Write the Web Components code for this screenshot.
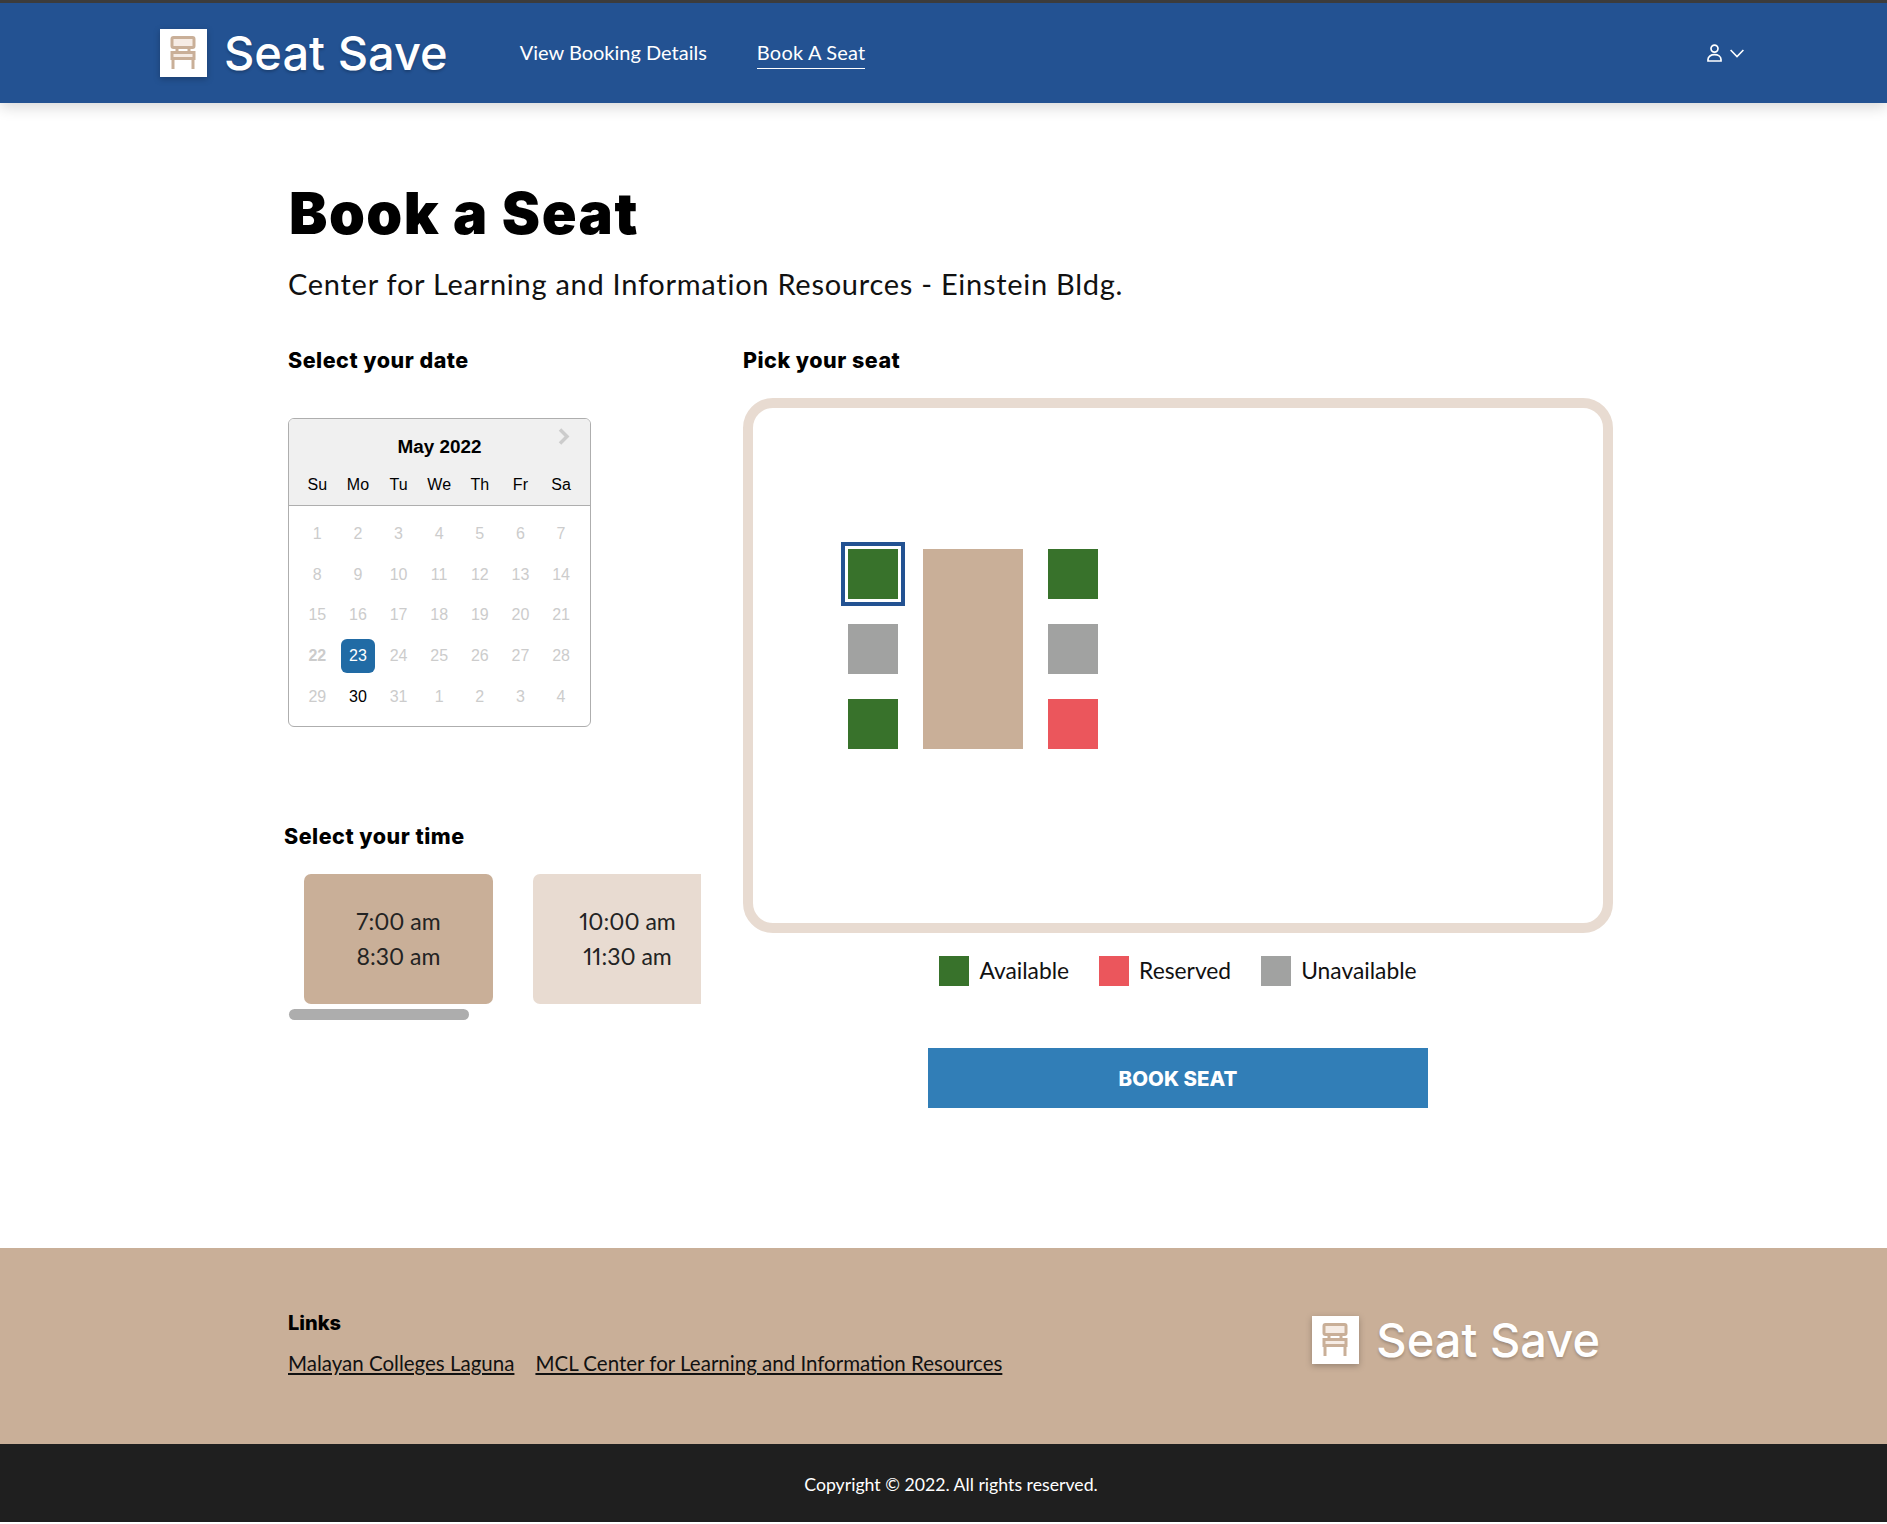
<!DOCTYPE html>
<html lang="en">
<head>
<meta charset="utf-8">
<title>Seat Save - Book a Seat</title>
<style>
  html, body { margin: 0; padding: 0; background: #fff; }
  body { font-family: "Lato", "Liberation Sans", sans-serif; color: #000; }
  page-main { display: block; }
</style>
</head>
<body>
<site-header></site-header>
<page-main>
  <booking-page></booking-page>
</page-main>
<site-footer></site-footer>

<script>
const FONT = '"Lato", "Liberation Sans", sans-serif';
const HEAVY = '"Inter", "Liberation Sans", sans-serif';

class SeatLogo extends HTMLElement {
  constructor() {
    super();
    this.attachShadow({ mode: 'open' });
    this.shadowRoot.innerHTML = `
      <style>
        :host { display: flex; align-items: center; gap: 17px; }
        svg { display: block; width: 47px; height: 48px; filter: drop-shadow(0 2px 3px rgba(0,0,0,.25)); }
        span {
          font: 500 47px/56px ${HEAVY};
          color: #fff;
          text-shadow: 0 2px 3px rgba(0,0,0,.22);
          white-space: nowrap;
        }
      </style>
      <svg viewBox="0 0 47 48">
        <rect width="47" height="48" fill="#fff"/>
        <g fill="none" stroke="#c9af98" stroke-width="3">
          <rect x="12" y="8.500" width="22" height="10" rx="1.500" fill="#f6ece5"/>
          <rect x="12" y="23.500" width="22" height="6" fill="#f6ece5"/>
          <path d="M17 18v5.500M29 18v5.500M13 29v11M33 29v11"/>
        </g>
      </svg>
      <span>Seat Save</span>
    `;
  }
}
customElements.define('seat-logo', SeatLogo);

class SiteHeader extends HTMLElement {
  constructor() {
    super();
    this.attachShadow({ mode: 'open' });
    this.shadowRoot.innerHTML = `
      <style>
        :host {
          display: flex;
          align-items: center;
          box-sizing: border-box;
          height: 103px;
          border-top: 3px solid #3c3c3c;
          padding: 0 143px 0 160px;
          background: #235292;
          box-shadow: 0 4px 14px rgba(0,0,0,.16);
          position: relative;
        }
        nav { display: flex; gap: 50px; margin-left: 72px; }
        a {
          font: 400 20px/28px ${FONT};
          color: #fff;
          text-decoration: none;
          padding-bottom: 2px;
          border-bottom: 1px solid transparent;
        }
        a.active { border-bottom-color: #fff; letter-spacing: 0.2px; }
        .user { display: flex; align-items: center; gap: 8px; margin-left: auto; }
        svg { display: block; }
      </style>
      <seat-logo></seat-logo>
      <nav>
        <a href="#">View Booking Details</a>
        <a href="#" class="active">Book A Seat</a>
      </nav>
      <div class="user">
        <svg width="15" height="18" viewBox="0 0 15 18" fill="none" stroke="#fff" stroke-width="1.7">
          <circle cx="7.5" cy="4.6" r="3.5"/>
          <path d="M1 17h13v-1.400c0-3-3-4.900-6.500-4.900s-6.500 1.900-6.500 4.900z"/>
        </svg>
        <svg width="14" height="9" viewBox="0 0 14 9" fill="none" stroke="#fff" stroke-width="1.6">
          <path d="M.6 1l6.400 6.500L13.400 1"/>
        </svg>
      </div>
    `;
  }
}
customElements.define('site-header', SiteHeader);

class SectionTitle extends HTMLElement {
  constructor() {
    super();
    this.attachShadow({ mode: 'open' });
    this.shadowRoot.innerHTML = `
      <style>
        :host { display: block; font: 800 21.5px/30px ${HEAVY}; letter-spacing: 0.5px; color: #000; }
      </style>
      <slot></slot>
    `;
  }
}
customElements.define('section-title', SectionTitle);

class DateCalendar extends HTMLElement {
  constructor() {
    super();
    this.attachShadow({ mode: 'open' });
    const names = ['Su', 'Mo', 'Tu', 'We', 'Th', 'Fr', 'Sa'];
    const days = [];
    for (let d = 1; d <= 31; d++) days.push(d);
    for (let d = 1; d <= 4; d++) days.push(d);
    const cells = days.map((d, i) => {
      let cls = 'day';
      if (i === 21) cls += ' today';
      if (i === 22) cls += ' selected';
      if (i === 29) cls += ' open';
      return `<div class="${cls}">${d}</div>`;
    }).join('');
    this.shadowRoot.innerHTML = `
      <style>
        :host {
          display: block;
          box-sizing: border-box;
          width: 303px;
          height: 309px;
          border: 1px solid #aeaeae;
          border-radius: 6px;
          font-family: "Liberation Sans", Arial, sans-serif;
          position: relative;
          overflow: hidden;
        }
        .head {
          background: #f0f0f0;
          border-bottom: 1px solid #aeaeae;
          height: 87px;
          box-sizing: border-box;
          padding-top: 9px;
        }
        .month { font-size: 18.88px; font-weight: 700; line-height: 38px; text-align: center; }
        .grid { display: grid; grid-template-columns: repeat(7, 34px); gap: 0 6.64px; padding: 0 11.3px; }
        .names { margin-top: 2px; }
        .names div { height: 34px; line-height: 34px; text-align: center; font-size: 16px; }
        .body { margin-top: 11px; row-gap: 6.64px; }
        .day { height: 34px; line-height: 34px; text-align: center; font-size: 16px; color: #ccc; border-radius: 6px; }
        .today { font-weight: 700; }
        .selected { background: #216ba5; color: #fff; }
        .open { color: #000; }
        .next { position: absolute; top: 9px; right: 20px; display: block; }
      </style>
      <div class="head">
        <div class="month">May 2022</div>
        <div class="grid names">${names.map(n => `<div>${n}</div>`).join('')}</div>
      </div>
      <div class="grid body">${cells}</div>
      <svg class="next" width="12" height="17" viewBox="0 0 12 17" fill="none" stroke="#ccc" stroke-width="3.5">
        <path d="M2 1.500l7 7-7 7"/>
      </svg>
    `;
  }
}
customElements.define('date-calendar', DateCalendar);

class TimeCard extends HTMLElement {
  constructor() {
    super();
    this.attachShadow({ mode: 'open' });
    this.shadowRoot.innerHTML = `
      <style>
        :host {
          display: flex;
          flex: none;
          align-items: center;
          justify-content: center;
          box-sizing: border-box;
          width: 189px;
          height: 130px;
          border-radius: 7px;
          background: #e8dbd1;
          color: #232323;
          font: 400 23px/35px ${FONT};
          font-variant-numeric: proportional-nums;
          text-align: center;
          white-space: pre-line;
        }
        :host([active]) { background: #c9af98; }
      </style>
      <slot></slot>
    `;
  }
}
customElements.define('time-card', TimeCard);

class TimeSlots extends HTMLElement {
  constructor() {
    super();
    this.attachShadow({ mode: 'open' });
    this.shadowRoot.innerHTML = `
      <style>
        :host { display: block; width: 413px; }
        .track { display: flex; gap: 40px; padding-left: 16px; overflow: hidden; }
        .thumb { width: 180px; height: 11px; margin: 5px 0 0 1px; border-radius: 6px; background: #adadad; }
      </style>
      <div class="track"><slot></slot></div>
      <div class="thumb"></div>
    `;
  }
}
customElements.define('time-slots', TimeSlots);

class SeatMap extends HTMLElement {
  constructor() {
    super();
    this.attachShadow({ mode: 'open' });
    this.shadowRoot.innerHTML = `
      <style>
        :host {
          display: block;
          box-sizing: border-box;
          height: 535px;
          border: 10px solid #e8dbd1;
          border-radius: 30px;
          padding: 141px 0 0 95px;
        }
        .plan {
          display: grid;
          grid-template-columns: 50px 100px 50px;
          grid-template-rows: repeat(3, 50px);
          gap: 25px;
          width: max-content;
        }
        .seat.green { background: #38722b; }
        .seat.grey { background: #a1a2a1; }
        .seat.red { background: #eb565c; }
        .seat.picked { outline: 4px solid #235292; outline-offset: 3px; }
        .table { grid-column: 2; grid-row: 1 / 4; background: #c9af98; }
      </style>
      <div class="plan">
        <div class="seat green picked" style="grid-area:1/1"></div>
        <div class="seat grey" style="grid-area:2/1"></div>
        <div class="seat green" style="grid-area:3/1"></div>
        <div class="table"></div>
        <div class="seat green" style="grid-area:1/3"></div>
        <div class="seat grey" style="grid-area:2/3"></div>
        <div class="seat red" style="grid-area:3/3"></div>
      </div>
    `;
  }
}
customElements.define('seat-map', SeatMap);

class SeatLegend extends HTMLElement {
  constructor() {
    super();
    this.attachShadow({ mode: 'open' });
    this.shadowRoot.innerHTML = `
      <style>
        :host {
          display: flex;
          justify-content: center;
          gap: 30px;
          font: 400 22.8px/30px ${FONT};
          color: #111;
        }
        div { display: flex; align-items: center; gap: 10px; }
        i { display: block; width: 30px; height: 30px; }
        span { margin-top: -2px; }
      </style>
      <div><i style="background:#38722b"></i><span>Available</span></div>
      <div><i style="background:#eb565c"></i><span>Reserved</span></div>
      <div><i style="background:#a1a2a1"></i><span>Unavailable</span></div>
    `;
  }
}
customElements.define('seat-legend', SeatLegend);

class BookButton extends HTMLElement {
  constructor() {
    super();
    this.attachShadow({ mode: 'open' });
    this.shadowRoot.innerHTML = `
      <style>
        :host { display: block; width: 500px; margin: 0 auto; }
        button {
          display: block;
          width: 100%;
          height: 60px;
          border: none;
          background: #317eb7;
          color: #fff;
          font: 800 20.5px/60px ${HEAVY};
          cursor: pointer;
        }
      </style>
      <button><slot></slot></button>
    `;
  }
}
customElements.define('book-button', BookButton);

class BookingPage extends HTMLElement {
  constructor() {
    super();
    this.attachShadow({ mode: 'open' });
    this.shadowRoot.innerHTML = `
      <style>
        :host { display: block; padding: 76px 0 140px 288px; }
        h1 { margin: 0 0 0 1px; font: 900 57.5px/68px ${HEAVY}; letter-spacing: 1.5px; color: #000; }
        .sub { margin: 17px 0 0; font: 400 29px/40px ${FONT}; letter-spacing: 0.73px; color: #111; }
        .cols { display: flex; gap: 42px; margin-top: 41px; }
        .left { width: 413px; flex: none; }
        .right { width: 870px; flex: none; }
        date-calendar { margin-top: 43px; }
        .time-title { margin: 94px 0 23px -4px; }
        seat-map { margin-top: 23px; }
        seat-legend { margin-top: 23px; }
        book-button { margin-top: 62px; }
      </style>
      <h1>Book a Seat</h1>
      <p class="sub">Center for Learning and Information Resources - Einstein Bldg.</p>
      <div class="cols">
        <div class="left">
          <section-title>Select your date</section-title>
          <date-calendar></date-calendar>
          <section-title class="time-title">Select your time</section-title>
          <time-slots>
            <time-card active>7:00 am
8:30 am</time-card>
            <time-card>10:00 am
11:30 am</time-card>
          </time-slots>
        </div>
        <div class="right">
          <section-title>Pick your seat</section-title>
          <seat-map></seat-map>
          <seat-legend></seat-legend>
          <book-button>BOOK SEAT</book-button>
        </div>
      </div>
    `;
  }
}
customElements.define('booking-page', BookingPage);

class SiteFooter extends HTMLElement {
  constructor() {
    super();
    this.attachShadow({ mode: 'open' });
    this.shadowRoot.innerHTML = `
      <style>
        :host { display: block; }
        .links-band {
          display: flex;
          justify-content: space-between;
          box-sizing: border-box;
          height: 196px;
          padding: 63px 287px 0 288px;
          background: #c9af98;
        }
        .label { font: 800 20px/24px ${HEAVY}; color: #000; }
        .row { display: flex; gap: 21px; margin-top: 14px; }
        a { font: 400 20.5px/28px ${FONT}; color: #111; text-decoration: underline; }
        seat-logo { margin-top: 1px; align-self: flex-start; }
        .copy {
          box-sizing: border-box;
          height: 78px;
          padding: 28px 0 0 15px;
          background: #1f1f1f;
          color: #fff;
          text-align: center;
          font: 400 17.7px/26px ${FONT};
        }
      </style>
      <div class="links-band">
        <div>
          <div class="label">Links</div>
          <div class="row">
            <a href="#">Malayan Colleges Laguna</a>
            <a href="#">MCL Center for Learning and Information Resources</a>
          </div>
        </div>
        <seat-logo></seat-logo>
      </div>
      <div class="copy">Copyright © 2022. All rights reserved.</div>
    `;
  }
}
customElements.define('site-footer', SiteFooter);
</script>
</body>
</html>
